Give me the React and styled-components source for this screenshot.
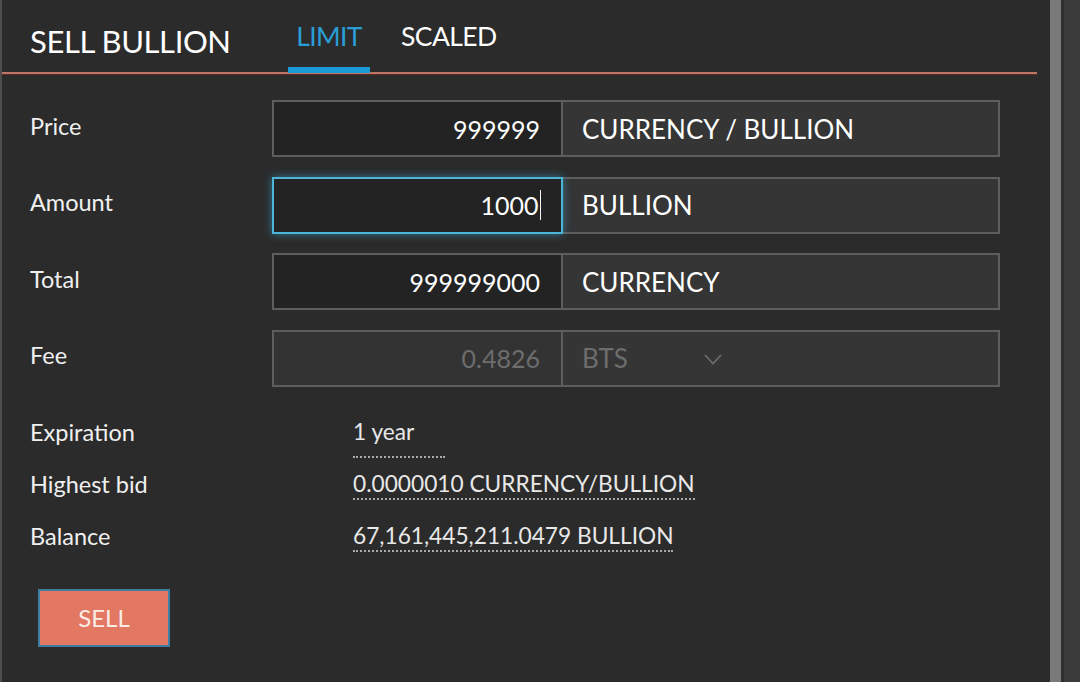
import React from 'react';
import styled, { createGlobalStyle } from 'styled-components';

const GlobalStyle = createGlobalStyle`
  html, body {
    margin: 0;
    padding: 0;
    background: #2b2b2b;
  }
  body {
    font-family: Lato, "Open Sans", sans-serif;
    color: #f2f2f2;
    overflow: hidden;
  }
`;

const Screen = styled.div`
  display: flex;
  width: 1080px;
  height: 682px;
`;

const Panel = styled.div`
  width: 1048px;
  border-left: 2px solid #4e4e4e;
  background: #2b2b2b;
`;

const Scrollbar = styled.div`
  width: 11px;
  background: #7a7a7a;
  border-right: 3px solid #2f2f2f;
`;

const SideStrip = styled.div`
  flex: 1;
  background: #3b3b3b;
`;

const Header = styled.div`
  display: flex;
  width: 1035px;
  height: 72px;
  border-bottom: 2px solid #bd7567;
  box-shadow: 0 1px 0 #5a2a24;
`;

const Title = styled.h1`
  margin: 0;
  flex: 0 0 286px;
  padding: 26px 0 0 28px;
  box-sizing: border-box;
  font-size: 31px;
  line-height: 1;
  font-weight: 400;
  color: #ffffff;
  letter-spacing: -0.4px;
`;

const Tabs = styled.div`
  display: flex;
  gap: 22px;
`;

const Tab = styled.div`
  display: flex;
  flex-direction: column;
  align-items: center;
  flex: 0 0 auto;
  width: ${(p) => (p.$active ? '82px' : 'auto')};
  height: 72px;
  padding: 23px 9px 0;
  box-sizing: border-box;
  font-size: 26.5px;
  line-height: 1;
  white-space: nowrap;
  color: ${(p) => (p.$active ? '#2a9ed6' : '#ffffff')};
  letter-spacing: -0.6px;

  &::after {
    content: '';
    margin: auto -9px -1px;
    align-self: stretch;
    height: 6px;
    background: ${(p) => (p.$active ? '#1b9ad8' : 'transparent')};
  }
`;

const Form = styled.div`
  display: flex;
  flex-direction: column;
  padding: 26px 0 0 28px;
`;

const Fields = styled.div`
  display: flex;
  flex-direction: column;
  gap: 19.5px;
`;

const FieldRow = styled.div`
  display: grid;
  grid-template-columns: 242px 291px 437px;
  height: 57px;
  align-items: center;
`;

const Label = styled.div`
  font-size: 23.5px;
  color: #f0f0f0;
  margin-top: -6px;
`;

const ValueBox = styled.div`
  display: flex;
  align-items: center;
  justify-content: flex-end;
  height: 57px;
  box-sizing: border-box;
  padding-right: ${(p) => (p.$focused ? '20px' : '21px')};
  border: 2px solid ${(p) => (p.$focused ? '#4cb4d6' : '#5e5e5e')};
  background: ${(p) => (p.$disabled ? '#333333' : '#232323')};
  box-shadow: ${(p) => (p.$focused ? '0 0 8px rgba(60, 170, 215, 0.6)' : 'none')};
  font-size: 25px;
  color: ${(p) => (p.$disabled ? '#6d6d6d' : '#ffffff')};
  position: relative;
  z-index: ${(p) => (p.$focused ? 1 : 0)};
`;

const Caret = styled.span`
  display: inline-block;
  width: 1.5px;
  height: 30px;
  margin-left: 1px;
  background: #f4f4f4;
`;

const Addon = styled.div`
  display: flex;
  align-items: center;
  height: 57px;
  box-sizing: border-box;
  padding-left: 19px;
  border: 2px solid #5e5e5e;
  border-left: none;
  background: #353535;
  font-size: 26px;
  color: ${(p) => (p.$disabled ? '#6d6d6d' : '#ffffff')};
`;

const SelectText = styled.span`
  width: 122px;
`;

const Chevron = () => (
  <svg width="18" height="11" viewBox="0 0 18 11" style={{ marginTop: 2 }}>
    <polyline points="1,1 9,9.5 17,1" fill="none" stroke="#6e6e6e" strokeWidth="1.6" />
  </svg>
);

const InfoList = styled.div`
  display: flex;
  flex-direction: column;
  margin-top: 31px;
`;

const InfoRow = styled.div`
  display: flex;
  align-items: flex-start;
  height: 52px;
  font-size: 23.5px;
  line-height: 1.2;
`;

const InfoLabel = styled.div`
  width: 323px;
  color: #f0f0f0;
`;

const InfoValue = styled.span`
  display: inline-block;
  font-size: 22.7px;
  line-height: 28.5px;
  color: #e8e8e8;
  min-width: ${(p) => (p.$select ? '92px' : 'auto')};
  padding-bottom: ${(p) => (p.$select ? '10px' : '0')};
  border-bottom: 2px dotted #a9a9a9;
`;

const SellButton = styled.button`
  width: 132px;
  height: 58px;
  margin: 15px 0 0 8px;
  border: 2px solid #3e7ea0;
  background: #e27862;
  color: #fbece6;
  font-family: Lato, "Open Sans", sans-serif;
  font-size: 24px;
  cursor: pointer;
`;

const fields = [
  { label: 'Price', value: '999999', unit: 'CURRENCY / BULLION' },
  { label: 'Amount', value: '1000', unit: 'BULLION', focused: true },
  { label: 'Total', value: '999999000', unit: 'CURRENCY' },
];

const info = [
  { label: 'Expiration', value: '1 year', select: true },
  { label: 'Highest bid', value: '0.0000010 CURRENCY/BULLION' },
  { label: 'Balance', value: '67,161,445,211.0479 BULLION' },
];

export default function App() {
  return (
    <>
      <GlobalStyle />
      <Screen>
        <Panel>
          <Header>
            <Title>SELL BULLION</Title>
            <Tabs>
              <Tab $active>LIMIT</Tab>
              <Tab>SCALED</Tab>
            </Tabs>
          </Header>
          <Form>
            <Fields>
              {fields.map((f) => (
                <FieldRow key={f.label}>
                  <Label>{f.label}</Label>
                  <ValueBox $focused={f.focused}>
                    {f.value}
                    {f.focused && <Caret />}
                  </ValueBox>
                  <Addon>{f.unit}</Addon>
                </FieldRow>
              ))}
              <FieldRow>
                <Label>Fee</Label>
                <ValueBox $disabled>0.4826</ValueBox>
                <Addon $disabled>
                  <SelectText>BTS</SelectText>
                  <Chevron />
                </Addon>
              </FieldRow>
            </Fields>
            <InfoList>
              {info.map((i) => (
                <InfoRow key={i.label}>
                  <InfoLabel>{i.label}</InfoLabel>
                  <InfoValue $select={i.select}>{i.value}</InfoValue>
                </InfoRow>
              ))}
            </InfoList>
            <div>
              <SellButton>SELL</SellButton>
            </div>
          </Form>
        </Panel>
        <Scrollbar />
        <SideStrip />
      </Screen>
    </>
  );
}
